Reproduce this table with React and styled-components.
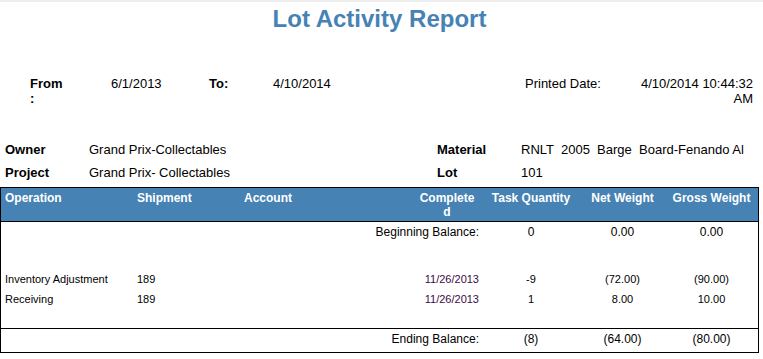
import React from 'react';
import styled, { createGlobalStyle } from 'styled-components';

const GlobalStyle = createGlobalStyle`
  html, body {
    margin: 0;
    padding: 0;
    background: #fff;
  }
  body {
    font-family: "Liberation Sans", Arial, sans-serif;
    color: #000;
    border-top: 2px solid #eeeeee;
  }
`;

const COLS = '132px 107px 172px 70px 98px 85px 93px';

const Page = styled.div`
  width: 759px;
`;

const Title = styled.h1`
  margin: 0;
  padding-top: 3px;
  font-size: 24px;
  line-height: 28px;
  font-weight: bold;
  color: #4682b4;
  text-align: center;
`;

const InfoRow = styled.div`
  display: flex;
  margin-top: 43px;
  padding-left: 30px;
  font-size: 13px;
  line-height: 15px;
`;

const InfoCell = styled.div`
  width: ${p => p.$w}px;
  flex: none;
  text-align: ${p => p.$right ? 'right' : 'left'};
  font-weight: ${p => p.$bold ? 'bold' : 'normal'};
`;

const NarrowLabel = styled.span`
  display: block;
  max-width: 36px;
`;

const Details = styled.div`
  display: grid;
  grid-template-columns: 84px 348px 84px 1fr;
  grid-auto-rows: 23px;
  margin-top: 32px;
  padding: 0 0 3px 5px;
  font-size: 13px;
  line-height: 23px;
`;

const DetailLabel = styled.div`
  font-weight: bold;
`;

const DetailValue = styled.div`
  white-space: pre;
`;

const Table = styled.div`
  box-sizing: border-box;
  width: 759px;
  border: 1px solid #000;
`;

const HeaderRow = styled.div`
  display: grid;
  grid-template-columns: ${COLS};
  height: 33px;
  box-sizing: content-box;
  background: #4682b4;
  border-bottom: 1px solid #000;
  color: #fff;
  font-size: 12px;
  font-weight: bold;
  line-height: 14px;
`;

const HeadCell = styled.div`
  padding: 3px ${p => p.$pad ?? 4}px 0;
  text-align: ${p => p.$align || 'left'};
  overflow-wrap: anywhere;
`;

const Body = styled.div`
  padding: 2px 0 19px;
`;

const Row = styled.div`
  display: grid;
  grid-template-columns: ${COLS};
  font-size: ${p => p.$small ? 11 : 12}px;
  line-height: ${p => p.$small ? 20 : 16}px;
  margin-top: ${p => p.$gap || 0}px;
`;

const Cell = styled.div`
  grid-column: ${p => p.$span ? `span ${p.$span}` : 'auto'};
  text-align: ${p => p.$align || 'left'};
  padding: 0 ${p => p.$align === 'right' ? 3 : 0}px 0 ${p => p.$align === 'left' || !p.$align ? 4 : 0}px;
  color: ${p => p.$date ? '#3a0a45' : '#000'};
  white-space: nowrap;
`;

const EndRow = styled(Row)`
  border-top: 1px solid #000;
  padding: 2px 0 5px;
`;

const rows = [
  { op: 'Inventory Adjustment', ship: '189', date: '11/26/2013', qty: '-9', net: '(72.00)', gross: '(90.00)' },
  { op: 'Receiving', ship: '189', date: '11/26/2013', qty: '1', net: '8.00', gross: '10.00' },
];

const BalanceRow = ({ label, qty, net, gross, as: Comp = Row, ...rest }) => (
  <Comp {...rest}>
    <Cell $span={4} $align="right">{label}</Cell>
    <Cell $align="center">{qty}</Cell>
    <Cell $align="center">{net}</Cell>
    <Cell $align="center">{gross}</Cell>
  </Comp>
);

export default function App() {
  return (
    <Page>
      <GlobalStyle />
      <Title>Lot Activity Report</Title>

      <InfoRow>
        <InfoCell $w={81} $bold><NarrowLabel>From :</NarrowLabel></InfoCell>
        <InfoCell $w={98}>6/1/2013</InfoCell>
        <InfoCell $w={64} $bold>To:</InfoCell>
        <InfoCell $w={252}>4/10/2014</InfoCell>
        <InfoCell $w={108}>Printed Date:</InfoCell>
        <InfoCell $w={120} $right>4/10/2014 10:44:32 AM</InfoCell>
      </InfoRow>

      <Details>
        <DetailLabel>Owner</DetailLabel>
        <DetailValue>Grand Prix-Collectables</DetailValue>
        <DetailLabel>Material</DetailLabel>
        <DetailValue>RNLT  2005  Barge  Board-Fenando Al</DetailValue>
        <DetailLabel>Project</DetailLabel>
        <DetailValue>Grand Prix- Collectables</DetailValue>
        <DetailLabel>Lot</DetailLabel>
        <DetailValue>101</DetailValue>
      </Details>

      <Table>
        <HeaderRow>
          <HeadCell>Operation</HeadCell>
          <HeadCell>Shipment</HeadCell>
          <HeadCell>Account</HeadCell>
          <HeadCell $align="center" $pad={6}>Completed</HeadCell>
          <HeadCell $align="center" $pad={0}>Task Quantity</HeadCell>
          <HeadCell $align="center" $pad={0}>Net Weight</HeadCell>
          <HeadCell $align="center" $pad={0}>Gross Weight</HeadCell>
        </HeaderRow>

        <Body>
          <BalanceRow label="Beginning Balance:" qty="0" net="0.00" gross="0.00" />
          {rows.map((r, i) => (
            <Row key={i} $small $gap={i === 0 ? 29 : 0}>
              <Cell>{r.op}</Cell>
              <Cell>{r.ship}</Cell>
              <Cell></Cell>
              <Cell $align="right" $date>{r.date}</Cell>
              <Cell $align="center">{r.qty}</Cell>
              <Cell $align="center">{r.net}</Cell>
              <Cell $align="center">{r.gross}</Cell>
            </Row>
          ))}
        </Body>

        <BalanceRow as={EndRow} label="Ending Balance:" qty="(8)" net="(64.00)" gross="(80.00)" />
      </Table>
    </Page>
  );
}
